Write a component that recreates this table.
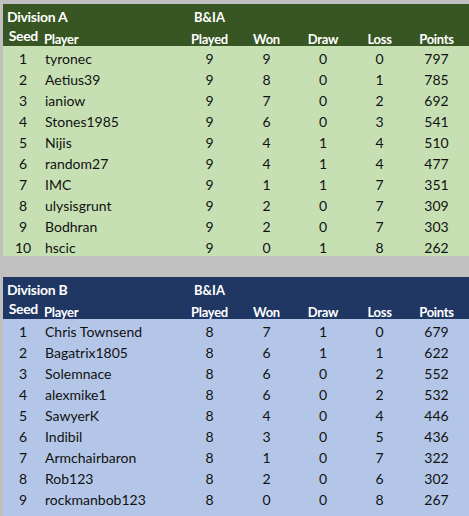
type Row = [number, string, number, number, number, number, number];

const divisionA: Row[] = [
  [1, "tyronec", 9, 9, 0, 0, 797],
  [2, "Aetius39", 9, 8, 0, 1, 785],
  [3, "ianiow", 9, 7, 0, 2, 692],
  [4, "Stones1985", 9, 6, 0, 3, 541],
  [5, "Nijis", 9, 4, 1, 4, 510],
  [6, "random27", 9, 4, 1, 4, 477],
  [7, "IMC", 9, 1, 1, 7, 351],
  [8, "ulysisgrunt", 9, 2, 0, 7, 309],
  [9, "Bodhran", 9, 2, 0, 7, 303],
  [10, "hscic", 9, 0, 1, 8, 262],
];

const divisionB: Row[] = [
  [1, "Chris Townsend", 8, 7, 1, 0, 679],
  [2, "Bagatrix1805", 8, 6, 1, 1, 622],
  [3, "Solemnace", 8, 6, 0, 2, 552],
  [4, "alexmike1", 8, 6, 0, 2, 532],
  [5, "SawyerK", 8, 4, 0, 4, 446],
  [6, "Indibil", 8, 3, 0, 5, 436],
  [7, "Armchairbaron", 8, 1, 0, 7, 322],
  [8, "Rob123", 8, 2, 0, 6, 302],
  [9, "rockmanbob123", 8, 0, 0, 8, 267],
];

const cols = "grid grid-cols-[40px_138px_57px_57px_56px_57px_57px]";

function Division({ title, rows, head, body, extraSeed }: { title: string; rows: Row[]; head: string; body: string; extraSeed?: string }) {
  return (
    <div className="ml-[3px]">
      <div className={`${head} text-white font-bold`}>
        <div className={`${cols} h-[22px] items-end pb-[2px] text-[13px]`}>
          <div className="col-span-2 pl-[4px] text-[14px] tracking-[-0.3px]">{title}</div>
          <div className="text-center">B&amp;IA</div>
        </div>
        <div className={`${cols} h-[20px] items-end text-[13px] tracking-[-0.3px]`}>
          <div className="text-right pr-[5px] text-[14px] self-center">Seed</div>
          <div className="pl-[1px]">Player</div>
          <div className="text-center">Played</div>
          <div className="text-center">Won</div>
          <div className="text-center">Draw</div>
          <div className="text-center">Loss</div>
          <div className="text-center">Points</div>
        </div>
      </div>
      <div className={`${body} text-[#111] text-[14px]`}>
        {rows.map((r) => (
          <div key={r[0]} className={`${cols} h-[21px] items-end pb-[1px]`}>
            <div className="text-center">{r[0]}</div>
            <div className="pl-[2px]">{r[1]}</div>
            {r.slice(2).map((v, i) => (
              <div key={i} className="text-center">{v}</div>
            ))}
          </div>
        ))}
        {extraSeed && (
          <div className={`${cols} h-[21px] items-end pb-[1px]`}>
            <div className="text-center">{extraSeed}</div>
          </div>
        )}
      </div>
    </div>
  );
}

export default function App() {
  return (
    <div className="w-[469px] h-[516px] overflow-hidden bg-[#c0c0c0] pt-[4px] font-['Lato',sans-serif] leading-none">
      <Division title="Division A" rows={divisionA} head="bg-[#375623]" body="bg-[#c6e0b4]" />
      <div className="h-[21px]" />
      <Division title="Division B" rows={divisionB} head="bg-[#203764]" body="bg-[#b4c6e7]" extraSeed="10" />
    </div>
  );
}
